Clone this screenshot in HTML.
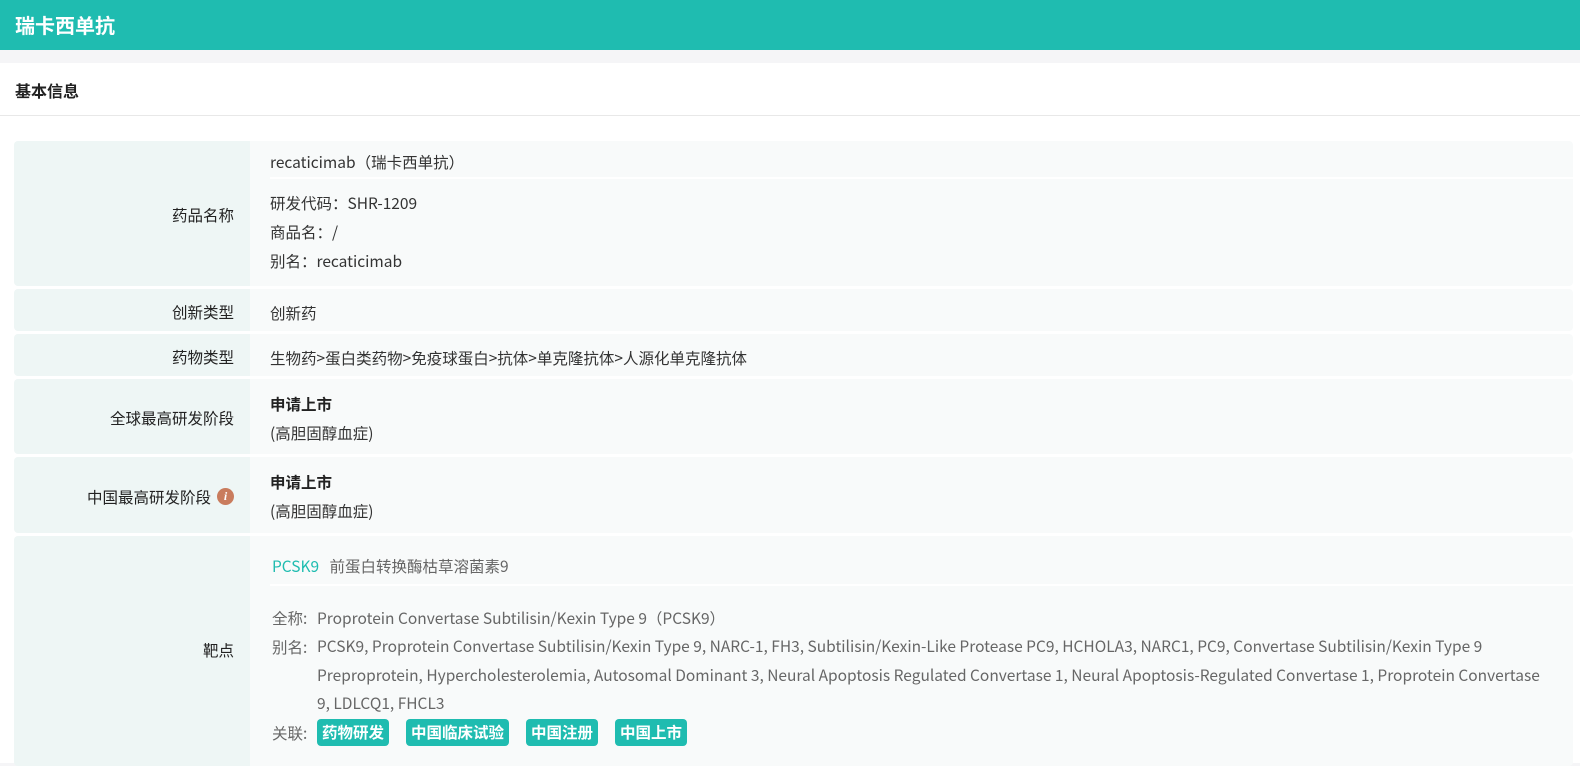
<!DOCTYPE html>
<html><head><meta charset="utf-8"><style>
*{margin:0;padding:0;box-sizing:border-box}
body{width:1580px;height:758px;overflow:hidden;background:#f5f5f7;font-family:"Noto Sans CJK SC","Liberation Sans",sans-serif;font-size:15.5px;color:#333}
.hdr{height:50px;background:#1fbcb0;color:#fff;font-weight:bold;font-size:20px;line-height:50px;padding-left:15px}
.card{position:absolute;top:63px;left:0;width:1580px;height:700px;background:#fff}
.ttl{height:53px;line-height:54px;padding-left:15px;font-weight:bold;font-size:16px;color:#222;border-bottom:1px solid #e8e8e8}
.row{position:absolute;left:14px;width:1559px;display:flex;border-radius:4px;overflow:hidden}
.lab{width:236px;background:#eef6f5;display:flex;align-items:center;justify-content:flex-end;padding-right:16px;color:#222;padding-top:3px}
.val{flex:1;background:#f8fafa;padding-left:20px}
.l{position:absolute;left:270px;line-height:22px;white-space:nowrap}
.b{font-weight:bold;color:#222}
.g{color:#666}
.tag{display:inline-block;background:#1fbcb0;color:#fff;font-weight:bold;border-radius:4px;padding:0 5px;line-height:27px;margin-right:17px}
.info{display:inline-block;width:17px;height:17px;border-radius:50%;background:#c97c5d;color:#fff;font-size:12px;font-style:italic;font-weight:bold;text-align:center;line-height:17px;margin-left:6px;font-family:"Liberation Serif",serif}
</style></head><body>
<div class="hdr">瑞卡西单抗</div>
<div class="card"><div class="ttl">基本信息</div></div>
<div class="row" style="top:141px;height:145px"><div class="lab">药品名称</div><div class="val"><div style="height:38px;border-bottom:2px solid #fff"></div></div></div>
<div class="row" style="top:289px;height:42px"><div class="lab">创新类型</div><div class="val"></div></div>
<div class="row" style="top:334px;height:42px"><div class="lab">药物类型</div><div class="val"></div></div>
<div class="row" style="top:379px;height:75px"><div class="lab">全球最高研发阶段</div><div class="val"></div></div>
<div class="row" style="top:457px;height:76px"><div class="lab">中国最高研发阶段<span class="info">i</span></div><div class="val"></div></div>
<div class="row" style="top:536px;height:230px"><div class="lab" style="align-items:flex-start;padding-top:103px">靶点</div><div class="val"><div style="height:50px;border-bottom:2px solid #fff"></div></div></div>

<div class="l" style="top:151px">recaticimab（瑞卡西单抗）</div>
<div class="l" style="top:192px">研发代码：SHR-1209</div>
<div class="l" style="top:221px">商品名：/</div>
<div class="l" style="top:250px">别名：recaticimab</div>
<div class="l" style="top:302px">创新药</div>
<div class="l" style="top:347px">生物药&gt;蛋白类药物&gt;免疫球蛋白&gt;抗体&gt;单克隆抗体&gt;人源化单克隆抗体</div>
<div class="l b" style="top:393px">申请上市</div>
<div class="l" style="top:422px">(高胆固醇血症)</div>
<div class="l b" style="top:471px">申请上市</div>
<div class="l" style="top:500px">(高胆固醇血症)</div>
<div class="l g" style="top:555px;left:272px"><span style="color:#1fbcb0">PCSK9</span>&nbsp;&nbsp;&nbsp;前蛋白转换酶枯草溶菌素9</div>
<div class="l g" style="top:607px;left:272px">全称:</div>
<div class="l g" style="top:607px;left:317px">Proprotein Convertase Subtilisin/Kexin Type 9（PCSK9）</div>
<div class="l g" style="top:636px;left:272px">别名:</div>
<div class="l g" style="top:632px;left:317px;width:1225px;line-height:28.5px;white-space:normal">PCSK9, Proprotein Convertase Subtilisin/Kexin Type 9, NARC-1, FH3, Subtilisin/Kexin-Like Protease PC9, HCHOLA3, NARC1, PC9, Convertase Subtilisin/Kexin Type 9 Preproprotein, Hypercholesterolemia, Autosomal Dominant 3, Neural Apoptosis Regulated Convertase 1, Neural Apoptosis-Regulated Convertase 1, Proprotein Convertase 9, LDLCQ1, FHCL3</div>
<div class="l g" style="top:722px;left:272px">关联:</div>
<div class="l" style="top:719px;left:317px;line-height:27px"><span class="tag">药物研发</span><span class="tag">中国临床试验</span><span class="tag">中国注册</span><span class="tag">中国上市</span></div>
</body></html>
